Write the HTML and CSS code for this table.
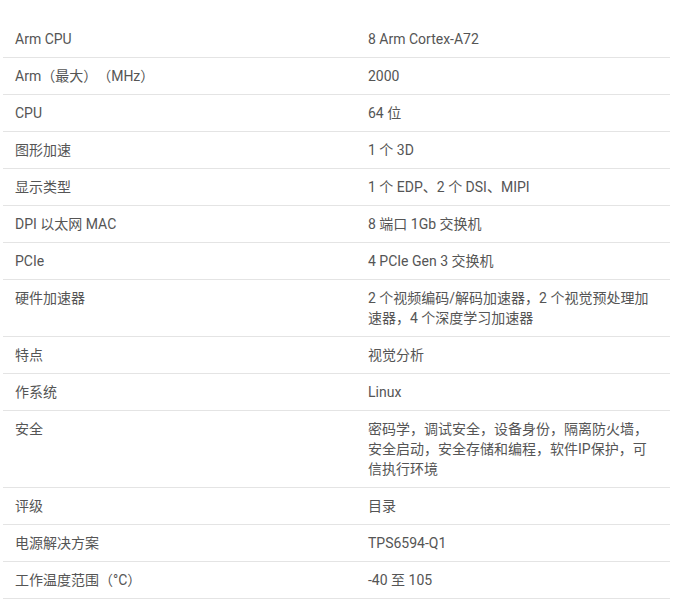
FILE: index.html
```html
<!DOCTYPE html>
<html lang="zh-CN">
<head>
<meta charset="utf-8">
<title>规格</title>
<link rel="stylesheet" href="styles.css">
</head>
<body>
<div class="page">
  <table class="specs">
    <tbody>
      <tr><td>Arm CPU</td><td>8 Arm Cortex-A72</td></tr>
      <tr><td>Arm（最大）（MHz）</td><td>2000</td></tr>
      <tr><td>CPU</td><td>64 位</td></tr>
      <tr><td>图形加速</td><td>1 个 3D</td></tr>
      <tr><td>显示类型</td><td>1 个 EDP、2 个 DSI、MIPI</td></tr>
      <tr><td>DPI 以太网 MAC</td><td>8 端口 1Gb 交换机</td></tr>
      <tr><td>PCIe</td><td>4 PCIe Gen 3 交换机</td></tr>
      <tr><td>硬件加速器</td><td>2 个视频编码/解码加速器，2 个视觉预处理加速器，4 个深度学习加速器</td></tr>
      <tr><td>特点</td><td>视觉分析</td></tr>
      <tr><td>作系统</td><td>Linux</td></tr>
      <tr><td>安全</td><td>密码学，调试安全，设备身份，隔离防火墙，安全启动，安全存储和编程，软件IP保护，可信执行环境</td></tr>
      <tr><td>评级</td><td>目录</td></tr>
      <tr><td>电源解决方案</td><td>TPS6594-Q1</td></tr>
      <tr><td>工作温度范围（°C）</td><td>-40 至 105</td></tr>
    </tbody>
  </table>
</div>
</body>
</html>
```

FILE: styles.css
```css
html, body {
  margin: 0;
  padding: 0;
  background: #ffffff;
}

.page {
  padding: 21px 0 0 3px;
}

.specs {
  width: 667px;
  border-collapse: collapse;
  table-layout: fixed;
  font-family: Roboto, "Noto Sans CJK SC", sans-serif;
  font-size: 14px;
  line-height: 20px;
  color: #555555;
  text-spacing-trim: space-all;
}

.specs td {
  padding: 8px 12px;
  vertical-align: top;
  border-bottom: 1px solid #e4e4e4;
  text-align: left;
}

.specs td:first-child {
  width: 329px;
}
```
